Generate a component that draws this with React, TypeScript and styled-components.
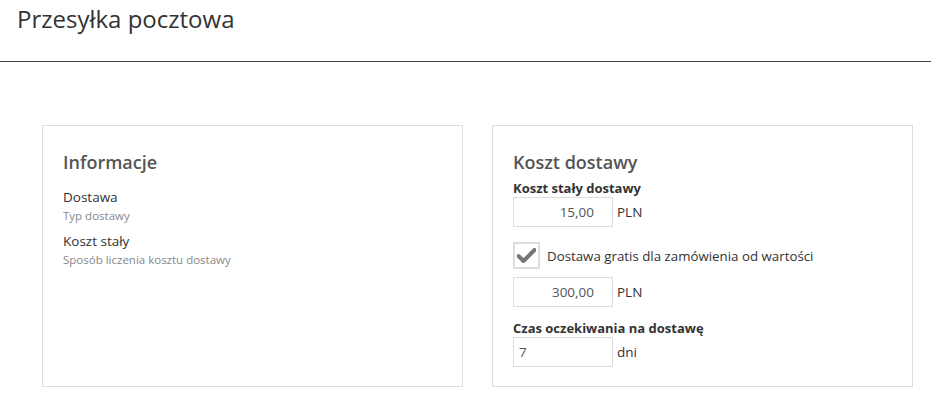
import styled, { createGlobalStyle } from "styled-components";

const GlobalStyle = createGlobalStyle`
  html, body {
    margin: 0;
    padding: 0;
    background: #fff;
  }
  body {
    font-family: "Open Sans", "Liberation Sans", sans-serif;
    color: #333;
  }
`;

function App(): JSX.Element {
  return (
    <>
      <GlobalStyle />
      <Header>
        <Title>Przesyłka pocztowa</Title>
      </Header>

      <Main>
        <Card>
          <CardTitle $gap={13}>Informacje</CardTitle>
          <InfoItem>
            <InfoName>Dostawa</InfoName>
            <InfoHint>Typ dostawy</InfoHint>
          </InfoItem>
          <InfoItem $gap={9}>
            <InfoName>Koszt stały</InfoName>
            <InfoHint>Sposób liczenia kosztu dostawy</InfoHint>
          </InfoItem>
        </Card>

        <Card>
          <CardTitle $gap={5}>Koszt dostawy</CardTitle>
          <FieldLabel>Koszt stały dostawy</FieldLabel>
          <InputRow>
            <NumberInput readOnly value="15,00" $align="right" />
            <Unit>PLN</Unit>
          </InputRow>

          <CheckRow>
            <CheckBox>
              <svg width="19" height="15" viewBox="0 0 19 15">
                <path
                  d="M1.5 8 L6.5 13 L17.5 2"
                  fill="none"
                  stroke="#777"
                  strokeWidth="4"
                  strokeLinecap="round"
                  strokeLinejoin="round"
                />
              </svg>
            </CheckBox>
            <CheckText>Dostawa gratis dla zamówienia od wartości</CheckText>
          </CheckRow>

          <InputRow $gap={8}>
            <NumberInput readOnly value="300,00" $align="right" />
            <Unit>PLN</Unit>
          </InputRow>

          <FieldLabel $gap={13}>Czas oczekiwania na dostawę</FieldLabel>
          <InputRow>
            <NumberInput readOnly value="7" $align="left" />
            <Unit>dni</Unit>
          </InputRow>
        </Card>
      </Main>
    </>
  );
}

const Header = styled.header`
  height: 62px;
  padding: 0 17px;
  border-bottom: 1px solid #444;
  box-sizing: border-box;
`;

const Title = styled.h1`
  margin: 0;
  padding-top: 2px;
  font-size: 24px;
  font-weight: 400;
  line-height: 34px;
  color: #333;
`;

const Main = styled.main`
  display: grid;
  grid-template-columns: 421px 421px;
  column-gap: 29px;
  padding: 63px 0 0 42px;
`;

const Card = styled.section`
  height: 262px;
  box-sizing: border-box;
  border: 1px solid #ddd;
  padding: 23px 20px 19px;
  display: flex;
  flex-direction: column;
  align-items: flex-start;
`;

const CardTitle = styled.h2<{ $gap: number }>`
  margin: 0 0 ${(p) => p.$gap}px;
  font-size: 18px;
  line-height: 26px;
  font-weight: 600;
  color: #555;
`;

const InfoItem = styled.div<{ $gap?: number }>`
  display: flex;
  flex-direction: column;
  margin-top: ${(p) => p.$gap ?? 0}px;
`;

const InfoName = styled.span`
  font-size: 13.5px;
  line-height: 19px;
  color: #333;
`;

const InfoHint = styled.span`
  font-size: 11.5px;
  line-height: 15px;
  color: #888;
  margin-top: 1px;
`;

const FieldLabel = styled.label<{ $gap?: number }>`
  display: block;
  margin-top: ${(p) => p.$gap ?? 0}px;
  font-size: 13px;
  line-height: 17px;
  font-weight: 700;
  color: #333;
`;

const InputRow = styled.div<{ $gap?: number }>`
  display: flex;
  align-items: center;
  gap: 4px;
  margin-top: ${(p) => p.$gap ?? 0}px;
`;

const NumberInput = styled.input<{ $align: "left" | "right" }>`
  width: 100px;
  height: 30px;
  box-sizing: border-box;
  border: 1px solid #ddd;
  padding: ${(p) => (p.$align === "right" ? "0 18px 0 6px" : "0 6px 0 5px")};
  text-align: ${(p) => p.$align};
  font-family: "Open Sans", "Liberation Sans", sans-serif;
  font-size: 13.5px;
  color: #555;
  background: #fff;

  &:focus {
    outline: none;
  }
`;

const Unit = styled.span`
  font-size: 13.5px;
  color: #333;
`;

const CheckRow = styled.div`
  display: flex;
  align-items: center;
  gap: 7px;
  margin-top: 15px;
`;

const CheckBox = styled.span`
  width: 27px;
  height: 27px;
  box-sizing: border-box;
  border: 2px solid #ddd;
  background: #fff;
  display: flex;
  align-items: center;
  justify-content: center;
`;

const CheckText = styled.span`
  font-size: 13.3px;
  color: #333;
`;

export default App;
